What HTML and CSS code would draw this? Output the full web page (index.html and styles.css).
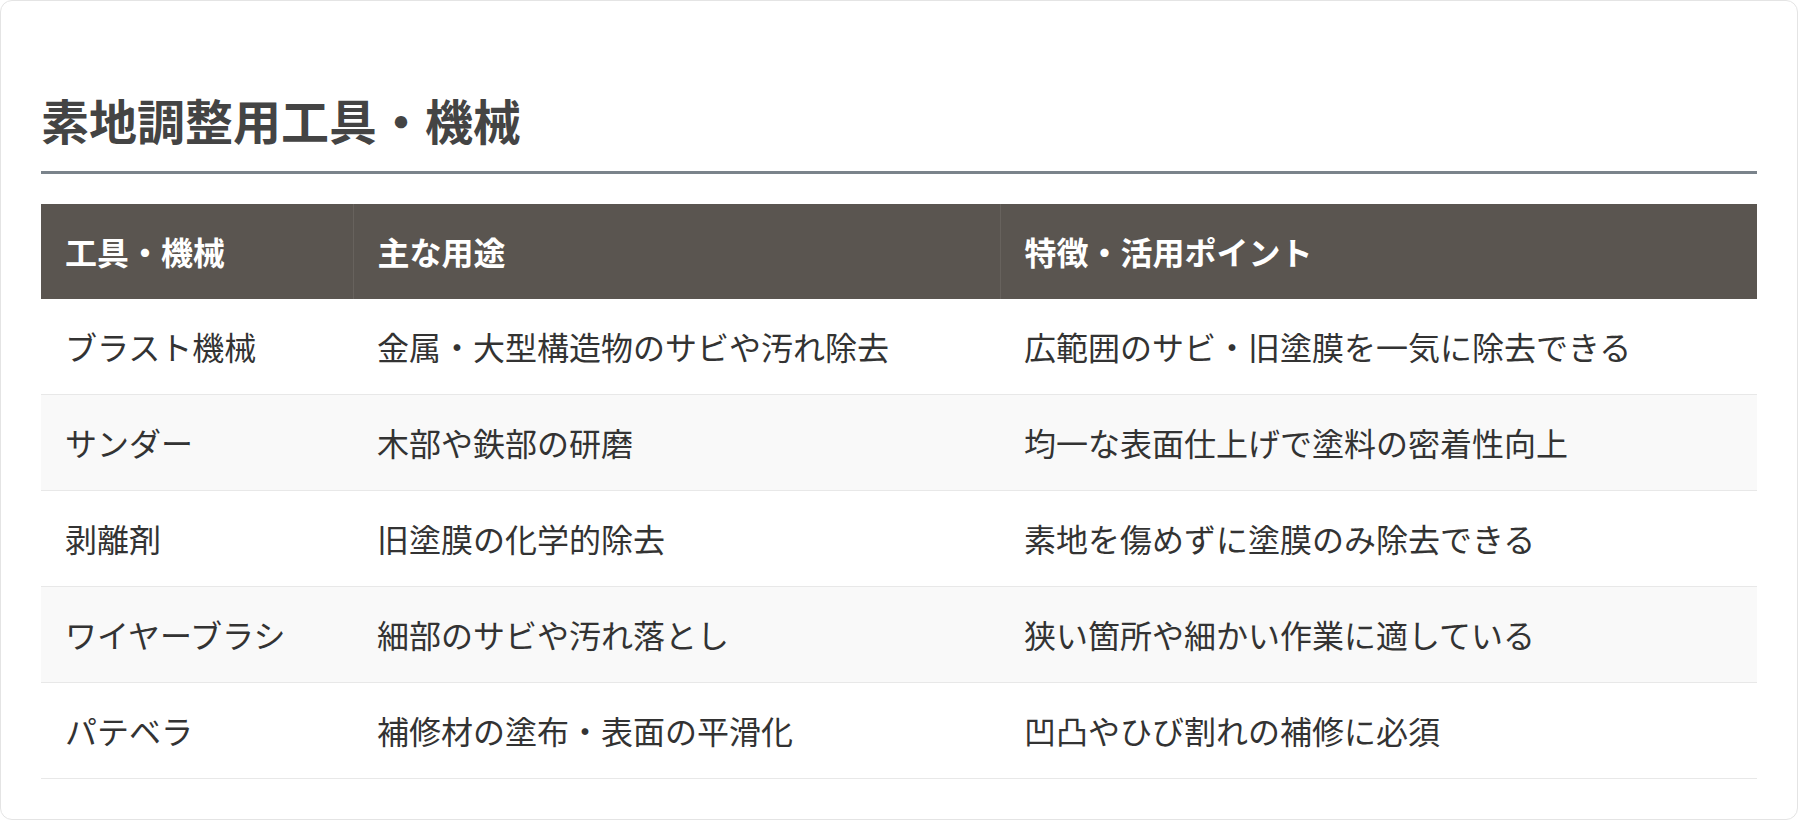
FILE: index.html
```html
<!DOCTYPE html>
<html lang="ja">
<head>
    <meta charset="UTF-8">
    <meta name="viewport" content="width=device-width, initial-scale=1.0">
    <title>素地調整用工具・機械</title>
    <link rel="stylesheet" href="styles.css">
</head>
<body>
    <div class="tool-card">
        <h2>素地調整用工具・機械</h2>
        <table class="tool-table">
            <colgroup>
                <col class="col-name">
                <col class="col-use">
                <col>
            </colgroup>
            <thead>
                <tr>
                    <th>工具・機械</th>
                    <th>主な用途</th>
                    <th>特徴・活用ポイント</th>
                </tr>
            </thead>
            <tbody>
                <tr>
                    <td>ブラスト機械</td>
                    <td>金属・大型構造物のサビや汚れ除去</td>
                    <td>広範囲のサビ・旧塗膜を一気に除去できる</td>
                </tr>
                <tr>
                    <td>サンダー</td>
                    <td>木部や鉄部の研磨</td>
                    <td>均一な表面仕上げで塗料の密着性向上</td>
                </tr>
                <tr>
                    <td>剥離剤</td>
                    <td>旧塗膜の化学的除去</td>
                    <td>素地を傷めずに塗膜のみ除去できる</td>
                </tr>
                <tr>
                    <td>ワイヤーブラシ</td>
                    <td>細部のサビや汚れ落とし</td>
                    <td>狭い箇所や細かい作業に適している</td>
                </tr>
                <tr>
                    <td>パテベラ</td>
                    <td>補修材の塗布・表面の平滑化</td>
                    <td>凹凸やひび割れの補修に必須</td>
                </tr>
            </tbody>
        </table>
    </div>
</body>
</html>
```

FILE: styles.css
```css
body {
    font-family: 'Noto Sans CJK JP', 'Noto Sans', sans-serif;
    margin: 0;
    background-color: #ffffff;
    color: #333333;
}

.tool-card {
    background-color: #ffffff;
    border: 1px solid #e4e4e4;
    border-radius: 12px;
    padding: 40px;
    margin-right: 2px;
}

.tool-card h2 {
    margin: 47px 0 30px;
    padding-bottom: 21px;
    font-size: 48px;
    line-height: 1.3;
    font-weight: 700;
    color: #444444;
    border-bottom: 3px solid #7a838b;
}

.tool-table {
    width: 100%;
    border-collapse: collapse;
    table-layout: fixed;
    font-size: 32px;
}

.tool-table .col-name {
    width: 312px;
}

.tool-table .col-use {
    width: 647px;
}

.tool-table th {
    background-color: #5a5550;
    color: #ffffff;
    font-weight: 700;
    text-align: left;
    padding: 24px;
    line-height: 47px;
    border-right: 1px solid #67625d;
}

.tool-table th:last-child {
    border-right: none;
}

.tool-table td {
    padding: 24px;
    line-height: 47px;
    border-bottom: 1px solid #e8e8e8;
    color: #333333;
}

.tool-table tbody tr:nth-child(even) {
    background-color: #f9f9f9;
}
```
